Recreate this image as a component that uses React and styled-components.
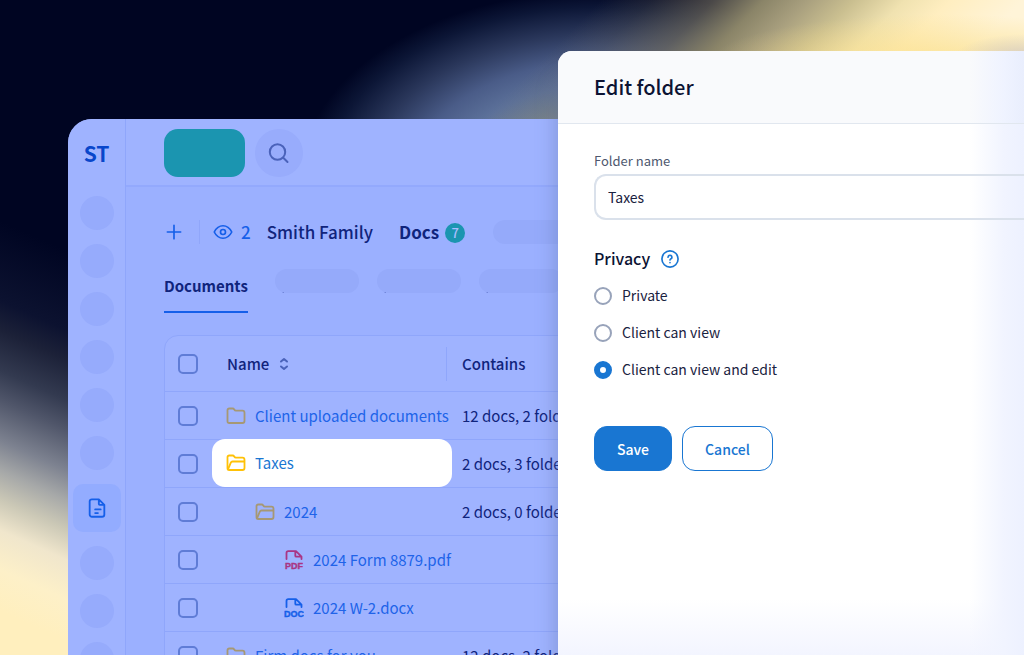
import React from 'react';
import styled, { createGlobalStyle } from 'styled-components';

const GlobalStyle = createGlobalStyle`
	*, *::before, *::after {
		box-sizing: border-box;
	}
	body {
		color: #0a1540;
		font-family: 'Noto Sans CJK SC', 'Noto Sans', sans-serif;
		font-size: 15px;
		line-height: 24px;
		margin: 0;
	}
	button, input {
		color: inherit;
		font: inherit;
	}
	a {
		color: inherit;
		text-decoration: none;
	}
`;

// yellow glow top right, blue haze above the window, pale yellow bottom left
const Page = styled.div`
	background-color: #000522;
	background-image:
		radial-gradient(ellipse 70px 24px at 1024px 58px, rgba(186, 184, 205, 0.6), rgba(186, 184, 205, 0)),
		radial-gradient(ellipse 230px 48px at 940px 62px, rgba(250, 222, 132, 0.75), rgba(250, 222, 132, 0)),
		linear-gradient(135deg, rgba(120, 112, 92, 0) 425px, rgba(120, 112, 92, 0.2) 460px, rgba(125, 118, 98, 0.6) 505px, #8a8468 540px, #a89f7e 571px, #cabf90 604px, #f0e2b0 640px, #ffeec0 672px, #fff4d8 724px),
		radial-gradient(ellipse 289px 182px at 600px 180px, #8494a6 30%, #708298 40%, #5c719a 52%, #4a5c88 65%, #2b385c 80%, #0c1636 95%, rgba(0, 5, 34, 0) 104%),
		linear-gradient(204deg, rgba(0, 5, 34, 0) 618px, #0c1230 691px, #1c2138 718px, #333a50 755px, #50566a 782px, #7d8290 819px, #a6a8a8 846px, #cbc8b6 873px, #f0e6cc 901px, #fdf0c8 937px, #ffefbe 975px);
	background-repeat: no-repeat;
	background-size: 100% 120px, 100% 120px, 100% 120px, 100% 120px, 100% 100%;
	min-height: 100vh;
	overflow: hidden;
	padding: 119px 0 0 68px;
	position: relative;
`;

const Window = styled.div`
	background: #9bb0ff;
	border-radius: 24px 0 0 0;
	color: #10247c;
	display: flex;
	height: calc(100vh - 119px);
	overflow: hidden;
`;

const SideNav = styled.nav`
	align-items: center;
	background: #9fb3ff;
	border-right: 1px solid #8fa6fb;
	display: flex;
	flex: none;
	flex-direction: column;
	padding-top: 19px;
	width: 58px;
`;

const Logo = styled.a`
	color: #0846cb;
	font-size: 21px;
	font-weight: 700;
	line-height: 30px;
	margin-bottom: 28px;
`;

const Dot = styled.span`
	background: #96abfc;
	border-radius: 50%;
	flex: none;
	height: 34px;
	margin-bottom: 14px;
	width: 34px;
`;

const NavLink = styled.a`
	align-items: center;
	background: #93acff;
	border-radius: 10px;
	color: #155fe9;
	display: flex;
	flex: none;
	height: 48px;
	justify-content: center;
	margin-bottom: 14px;
	width: 48px;
`;

const Main = styled.main`
	flex: 1;
	min-width: 0;
`;

const TopBar = styled.header`
	align-items: center;
	background: #9fb3ff;
	border-bottom: 2px solid #93a9fd;
	display: flex;
	gap: 10px;
	height: 68px;
	padding: 2px 0 0 38px;
`;

const NewButton = styled.button`
	background: #1b95b0;
	border: 0;
	border-radius: 14px;
	height: 48px;
	width: 81px;
`;

const SearchButton = styled.button`
	align-items: center;
	background: #98acfc;
	border: 0;
	border-radius: 50%;
	color: #4a62ba;
	display: flex;
	height: 48px;
	justify-content: center;
	padding: 0;
	width: 48px;
`;

const Content = styled.div`
	padding: 27px 0 0 38px;
`;

const TitleRow = styled.div`
	align-items: center;
	display: flex;
	font-size: 17px;
	font-weight: 500;
	height: 36px;
`;

const IconButton = styled.button`
	align-items: center;
	background: transparent;
	border: 0;
	color: #155fe9;
	display: flex;
	font-weight: 500;
	gap: 8px;
	padding: 0;
`;

const Divider = styled.span`
	border-left: 1px solid #90a6fa;
	height: 24px;
	margin: 0 13px 0 15px;
`;

const Client = styled.span`
	margin: 0 26px 0 16px;
`;

const Docs = styled.span`
	font-weight: 700;
`;

const Badge = styled.span`
	background: #1b95b0;
	border-radius: 50%;
	color: #a9bdff;
	font-size: 13px;
	font-weight: 500;
	height: 20px;
	line-height: 20px;
	margin: 2px 28px 0 6px;
	text-align: center;
	width: 20px;
`;

const Pill = styled.span`
	background: #95aafa;
	border-radius: 12px;
	height: 24px;
	width: 84px;
`;

const TabPill = styled(Pill)`
	background: linear-gradient(#4a5fb8, #4a5fb8) 7px 100% / 2px 1px no-repeat #95aafa;
`;

const Tabs = styled.div`
	align-items: flex-start;
	display: flex;
	gap: 18px;
	margin-top: 19px;
`;

const Tab = styled.a`
	border-bottom: 2px solid #155fe9;
	font-weight: 700;
	height: 44px;
	line-height: 34px;
	margin-right: 9px;
`;

const Table = styled.table`
	background: #9fb3ff;
	border: 1px solid #8fa6fb;
	border-radius: 14px 0 0 0;
	border-spacing: 0;
	margin-top: 22px;
	table-layout: fixed;
	width: 100%;
`;

const HeadCell = styled.th`
	font-weight: 500;
	height: 55px;
	padding: 0;
	text-align: left;
	width: ${props => props.$width || 'auto'};
`;

const HeadLabel = styled.div`
	align-items: center;
	border-right: ${props => (props.$divided ? '1px solid #8fa6fb' : '0')};
	display: flex;
	gap: 10px;
	height: 34px;
	padding-left: 15px;
`;

const Cell = styled.td`
	border-top: 1px solid #8fa6fb;
	height: 48px;
	padding: 0;
	white-space: nowrap;
`;

const Contains = styled.div`
	padding-left: 15px;
`;

const Checkbox = styled.input`
	appearance: none;
	border: 2px solid #5f7cd6;
	border-radius: 5px;
	display: block;
	height: 20px;
	margin: 0 0 0 13px;
	width: 20px;
`;

const Item = styled.a`
	align-items: center;
	background: ${props => (props.$active ? '#fff' : 'transparent')};
	border-radius: 13px;
	color: ${props => (props.$active ? '#1976d2' : '#2063e9')};
	display: flex;
	gap: 9px;
	height: ${props => (props.$active ? '48px' : '47px')};
	margin-top: ${props => (props.$active ? '-1px' : '0')};
	padding-left: ${props => 14 + props.$depth * 29}px;
	width: 240px;
`;

const Drawer = styled.form`
	background:
		linear-gradient(to right, rgba(240, 243, 255, 0) calc(100% - 54px), #f1f4ff calc(100% - 20px), #edf1ff 100%),
		linear-gradient(to bottom, #fff calc(100% - 56px), #f3f5ff 100%);
	border-radius: 14px 0 0 0;
	bottom: 0;
	box-shadow: -2px 28px 20px rgba(90, 110, 160, 0.4);
	color: #1a2240;
	left: 558px;
	overflow: hidden;
	position: absolute;
	right: 0;
	top: 51px;
`;

const DrawerHead = styled.header`
	background: linear-gradient(to right, #f9fafc calc(100% - 54px), #eff3ff calc(100% - 20px), #e9eefd 100%);
	border-bottom: 1px solid #e1e7ef;
	padding: 20px 36px;
`;

const DrawerTitle = styled.h2`
	color: #0c1333;
	font-size: 20px;
	font-weight: 500;
	line-height: 32px;
	margin: 0;
`;

const DrawerBody = styled.div`
	padding: 26px 0 0 36px;
`;

const Label = styled.label`
	color: #4e586e;
	display: block;
	font-size: 13px;
	line-height: 22px;
	margin-bottom: 2px;
`;

const TextInput = styled.input`
	background: transparent;
	border: 2px solid #dae1eb;
	border-radius: 12px 0 0 12px;
	border-right: 0;
	display: block;
	font-size: 14px;
	height: 46px;
	padding: 0 12px;
	width: 100%;
`;

const Privacy = styled.fieldset`
	border: 0;
	margin: 26px 0 0;
	padding: 0;
`;

const Legend = styled.legend`
	align-items: center;
	color: #0c1333;
	display: flex;
	font-size: 16px;
	font-weight: 500;
	gap: 10px;
	line-height: 25px;
	padding: 0;
`;

const HelpButton = styled(IconButton)`
	color: #1976d2;
`;

const Option = styled.label`
	align-items: center;
	display: flex;
	font-size: 14px;
	gap: 10px;
	line-height: 25px;
	margin-top: 12px;
`;

const Radio = styled.input`
	appearance: none;
	background: #fff;
	border: 2px solid #98a3ba;
	border-radius: 50%;
	height: 18px;
	margin: 0;
	width: 18px;

	&:checked {
		border: 6px solid #1976d2;
	}
`;

const Actions = styled.div`
	display: flex;
	gap: 10px;
	margin-top: 44px;
`;

const Button = styled.button`
	background: ${props => (props.$primary ? '#1976d2' : '#fff')};
	border: 1px solid #1976d2;
	border-radius: 13px;
	color: ${props => (props.$primary ? '#fff' : '#1976d2')};
	font-size: 14px;
	font-weight: 500;
	height: 45px;
	padding: 0 22px;
`;

const Icon = ({ size = 20, width = 2, children }) => (
	<svg width={size} height={size} viewBox='0 0 24 24' fill='none' stroke='currentColor' strokeWidth={width} strokeLinecap='round' strokeLinejoin='round' aria-hidden='true'>
		{children}
	</svg>
);

const FolderIcon = ({ open, color }) => (
	<svg width='20' height='20' viewBox='0 0 20 20' fill='none' stroke={color} strokeWidth='1.8' strokeLinecap='round' strokeLinejoin='round' aria-hidden='true'>
		<path d='M1.5 4.2a1.7 1.7 0 0 1 1.7-1.7h3.5c.8 0 1.1.3 1.5 1 .5.9.8 1.2 1.8 1.2h6.5a2 2 0 0 1 2 2v8.3a2 2 0 0 1-2 2H3.3a1.8 1.8 0 0 1-1.8-1.8z' />
		{open && <path d='M2 16.3 4.8 9.7c.4-.9.8-1.2 1.7-1.2h11.7' />}
	</svg>
);

const FileIcon = ({ type, color }) => (
	<svg width='20' height='20' viewBox='0 0 20 20' fill='none' stroke={color} strokeWidth='1.8' strokeLinecap='round' strokeLinejoin='round' aria-hidden='true'>
		<path d='M2.5 9V3A1.8 1.8 0 0 1 4.3 1.2H12L17.5 6.7V9M11.3 1.5V5.7a1 1 0 0 0 1 1h4.7' />
		<text x='10' y='19' fill={color} strokeWidth='0.4' textAnchor='middle' fontFamily='Liberation Sans, sans-serif' fontSize='9' fontWeight='700'>
			{type}
		</text>
	</svg>
);

const rows = [
	{ name: 'Client uploaded documents', contains: '12 docs, 2 folders', kind: 'folder', depth: 0 },
	{ name: 'Taxes', contains: '2 docs, 3 folders', kind: 'open', depth: 0, active: true },
	{ name: '2024', contains: '2 docs, 0 folders', kind: 'open', depth: 1 },
	{ name: '2024 Form 8879.pdf', contains: '', kind: 'PDF', depth: 2 },
	{ name: '2024 W-2.docx', contains: '', kind: 'DOC', depth: 2 },
	{ name: 'Firm docs for you', contains: '12 docs, 2 folders', kind: 'folder', depth: 0 }
];

const RowIcon = ({ kind, active }) => {
	if (kind === 'PDF') return <FileIcon type='PDF' color='#a93585' />;
	if (kind === 'DOC') return <FileIcon type='DOC' color='#155fe9' />;
	return <FolderIcon open={kind === 'open'} color={active ? '#ffc107' : '#a69874'} />;
};

const Sidebar = () => (
	<SideNav>
		<Logo href='#home'>ST</Logo>
		{[1, 2, 3, 4, 5, 6].map(n => (
			<Dot key={n} />
		))}
		<NavLink href='#docs' aria-label='Docs'>
			<Icon size={22}>
				<path d='M14 2.5H6.5A2.5 2.5 0 0 0 4 5v14a2.5 2.5 0 0 0 2.5 2.5h11A2.5 2.5 0 0 0 20 19V8.5zM14 2.5v5a1 1 0 0 0 1 1h5M10 13.5h6M10 17.5h3' />
			</Icon>
		</NavLink>
		{[7, 8, 9].map(n => (
			<Dot key={n} />
		))}
	</SideNav>
);

const DocsTable = () => (
	<Table>
		<thead>
			<tr>
				<HeadCell $width='47px'>
					<Checkbox type='checkbox' aria-label='Select all' />
				</HeadCell>
				<HeadCell $width='235px'>
					<HeadLabel $divided>
						Name
						<svg width='10' height='14' viewBox='0 0 10 14' fill='none' stroke='#4a62ba' strokeWidth='2' strokeLinecap='round' strokeLinejoin='round' aria-hidden='true'>
							<path d='M2 4.5 5 2l3 2.5M2 9.5 5 12l3-2.5' />
						</svg>
					</HeadLabel>
				</HeadCell>
				<HeadCell>
					<HeadLabel>Contains</HeadLabel>
				</HeadCell>
			</tr>
		</thead>
		<tbody>
			{rows.map(row => (
				<tr key={row.name}>
					<Cell>
						<Checkbox type='checkbox' aria-label={`Select ${row.name}`} />
					</Cell>
					<Cell>
						<Item href='#doc' $depth={row.depth} $active={row.active}>
							<RowIcon kind={row.kind} active={row.active} />
							{row.name}
						</Item>
					</Cell>
					<Cell>
						<Contains>{row.contains}</Contains>
					</Cell>
				</tr>
			))}
		</tbody>
	</Table>
);

const EditFolder = () => (
	<Drawer onSubmit={e => e.preventDefault()}>
		<DrawerHead>
			<DrawerTitle>Edit folder</DrawerTitle>
		</DrawerHead>
		<DrawerBody>
			<Label htmlFor='folder-name'>Folder name</Label>
			<TextInput id='folder-name' type='text' defaultValue='Taxes' />
			<Privacy>
				<Legend>
					Privacy
					<HelpButton type='button' aria-label='About privacy'>
						<Icon size={20}>
							<circle cx='12' cy='12' r='9.7' />
							<path d='M9.7 9.8a2.3 2.3 0 1 1 3.5 2c-.8.5-1.2.9-1.2 1.5M12 16.4v.1' />
						</Icon>
					</HelpButton>
				</Legend>
				{['Private', 'Client can view', 'Client can view and edit'].map((option, i) => (
					<Option key={option}>
						<Radio type='radio' name='privacy' defaultChecked={i === 2} />
						{option}
					</Option>
				))}
			</Privacy>
			<Actions>
				<Button $primary>Save</Button>
				<Button type='button'>Cancel</Button>
			</Actions>
		</DrawerBody>
	</Drawer>
);

const App = () => (
	<Page>
		<GlobalStyle />
		<Window>
			<Sidebar />
			<Main>
				<TopBar>
					<NewButton aria-label='New' />
					<SearchButton aria-label='Search'>
						<Icon size={24}>
							<circle cx='10.5' cy='11' r='7.7' />
							<path d='m16.5 17 4 4' />
						</Icon>
					</SearchButton>
				</TopBar>
				<Content>
					<TitleRow>
						<IconButton aria-label='Add'>
							<Icon>
								<path d='M12 4v16M4 12h16' />
							</Icon>
						</IconButton>
						<Divider />
						<IconButton>
							<Icon>
								<path d='M1.5 12C4 7 7.7 4.5 12 4.5S20 7 22.5 12C20 17 16.3 19.5 12 19.5S4 17 1.5 12z' />
								<circle cx='12' cy='12' r='3' />
							</Icon>
							2
						</IconButton>
						<Client>Smith Family</Client>
						<Docs>Docs</Docs>
						<Badge>7</Badge>
						<Pill />
					</TitleRow>
					<Tabs>
						<Tab href='#documents'>Documents</Tab>
						<TabPill />
						<TabPill />
						<TabPill />
					</Tabs>
					<DocsTable />
				</Content>
			</Main>
		</Window>
		<EditFolder />
	</Page>
);

export default App;
